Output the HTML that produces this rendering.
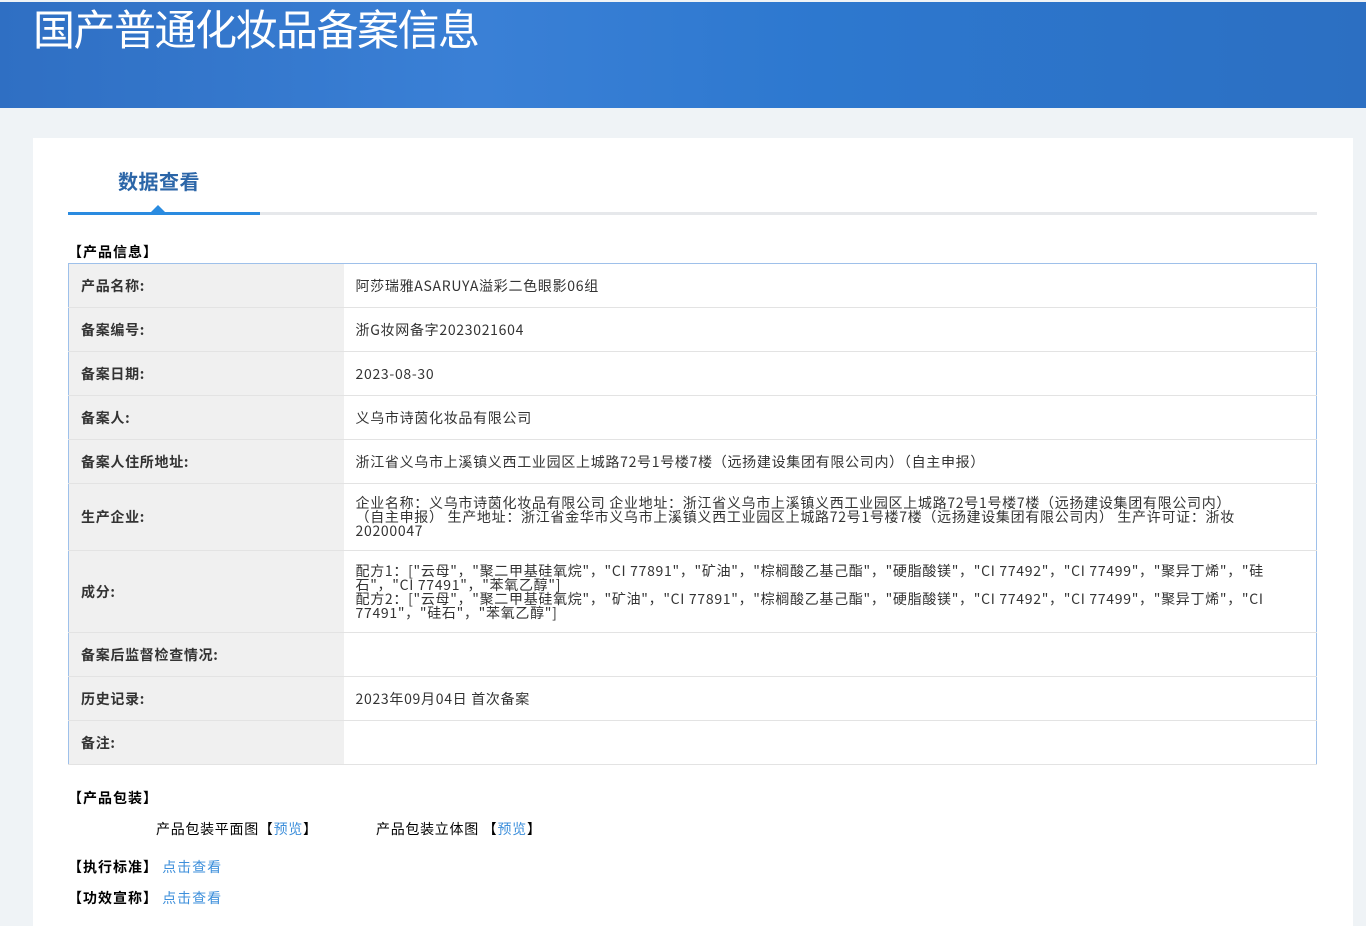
<!DOCTYPE html>
<html><head><meta charset="utf-8">
<style>
*{margin:0;padding:0;box-sizing:border-box}
html,body{width:1366px;height:926px;overflow:hidden}
body{background:#eff3f6;font-family:"Noto Sans CJK SC","Liberation Sans",sans-serif;color:#333}
.hdr{position:absolute;left:0;top:2px;width:1366px;height:106px;background:linear-gradient(90deg,#2f6fc3 0%,#3a80d6 35%,#2d78cf 60%,#2c6fc2 100%);overflow:hidden}
.hdr h1{position:absolute;left:33px;top:-4px;font-size:42px;line-height:60px;font-weight:normal;color:#fff;letter-spacing:-1.5px}
.card{position:absolute;left:33px;top:138px;width:1320px;height:788px;background:#fff}
.tab{position:absolute;left:85px;top:29px;font-size:20px;line-height:28px;font-weight:bold;color:#2c66a8;letter-spacing:0.5px}
.line{position:absolute;left:35px;top:74px;width:1249px;height:3px;background:#e6e8eb}
.line b{position:absolute;left:0;top:0;width:192px;height:3px;background:#2a8be0}
.tri{position:absolute;left:118px;top:67px;width:0;height:0;border-left:7px solid transparent;border-right:7px solid transparent;border-bottom:7px solid #2a8be0}
.sec{position:absolute;left:35px;font-size:14px;line-height:20px;font-weight:bold;color:#000;letter-spacing:1px}
table{position:absolute;left:35px;top:125px;width:1249px;border-collapse:collapse;border:1px solid #9ec0ea;font-size:14px}
td{border-bottom:1px solid #e3e3e3;vertical-align:middle}
td.l{width:275px;background:#f0f0f0;font-weight:bold;padding-left:12px;color:#333;letter-spacing:0.7px}
td.v{padding-left:12px;line-height:14px;color:#333;letter-spacing:0.7px}
a{color:#3d8fdb;text-decoration:none}
.t{position:absolute;font-size:14px;line-height:20px;color:#000;letter-spacing:0.7px}
</style></head><body>
<div class="hdr"><h1>国产普通化妆品备案信息</h1></div>
<div class="card">
<div class="tab">数据查看</div>
<div class="line"><b></b></div>
<div class="tri"></div>
<div class="sec" style="top:104px">【产品信息】</div>
<table>
<tr style="height:44px"><td class="l">产品名称:</td><td class="v">阿莎瑞雅ASARUYA溢彩二色眼影06组</td></tr>
<tr style="height:44px"><td class="l">备案编号:</td><td class="v">浙G妆网备字2023021604</td></tr>
<tr style="height:44px"><td class="l">备案日期:</td><td class="v">2023-08-30</td></tr>
<tr style="height:44px"><td class="l">备案人:</td><td class="v">义乌市诗茵化妆品有限公司</td></tr>
<tr style="height:44px"><td class="l">备案人住所地址:</td><td class="v">浙江省义乌市上溪镇义西工业园区上城路72号1号楼7楼（远扬建设集团有限公司内）（自主申报）</td></tr>
<tr style="height:67px"><td class="l">生产企业:</td><td class="v" style="padding-right:80px">企业名称：义乌市诗茵化妆品有限公司 企业地址：浙江省义乌市上溪镇义西工业园区上城路72号1号楼7楼（远扬建设集团有限公司内）（自主申报） 生产地址：浙江省金华市义乌市上溪镇义西工业园区上城路72号1号楼7楼（远扬建设集团有限公司内） 生产许可证：浙妆20200047</td></tr>
<tr style="height:82px"><td class="l">成分:</td><td class="v" style="padding-right:0">配方1：["云母"，"聚二甲基硅氧烷"，"CI 77891"，"矿油"，"棕榈酸乙基己酯"，"硬脂酸镁"，"CI 77492"，"CI 77499"，"聚异丁烯"，"硅石"，"CI 77491"，"苯氧乙醇"]<br>配方2：["云母"，"聚二甲基硅氧烷"，"矿油"，"CI 77891"，"棕榈酸乙基己酯"，"硬脂酸镁"，"CI 77492"，"CI 77499"，"聚异丁烯"，"CI 77491"，"硅石"，"苯氧乙醇"]</td></tr>
<tr style="height:44px"><td class="l">备案后监督检查情况:</td><td class="v"></td></tr>
<tr style="height:44px"><td class="l">历史记录:</td><td class="v">2023年09月04日 首次备案</td></tr>
<tr style="height:44px"><td class="l">备注:</td><td class="v"></td></tr>
</table>
<div class="sec" style="top:650px">【产品包装】</div>
<div class="t" style="left:123px;top:681px">产品包装平面图【<a>预览</a>】</div>
<div class="t" style="left:343px;top:681px">产品包装立体图 【<a>预览</a>】</div>
<div class="sec" style="top:719px">【执行标准】 <a style="font-weight:normal">点击查看</a></div>
<div class="sec" style="top:750px">【功效宣称】 <a style="font-weight:normal">点击查看</a></div>
</div>
</body></html>
